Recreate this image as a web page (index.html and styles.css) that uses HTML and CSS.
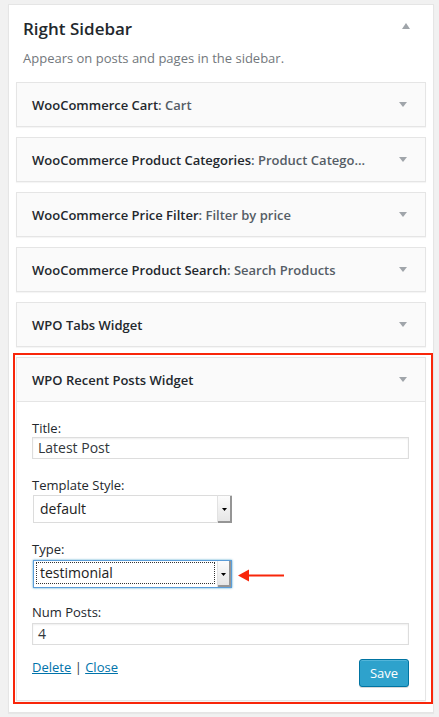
FILE: index.html
```html
<!DOCTYPE html>
<html lang="en">
<head>
<meta charset="utf-8">
<title>Right Sidebar</title>
<link rel="stylesheet" href="styles.css">
</head>
<body>
<div class="sidebar">
  <div class="sidebar-head">
    <div class="sidebar-text">
      <h2 class="sidebar-name">Right Sidebar</h2>
      <p class="sidebar-desc">Appears on posts and pages in the sidebar.</p>
    </div>
    <svg class="toggle-up" width="8" height="6" viewBox="0 0 8 6"><path d="M4 0L8 6H0z" fill="#a0a5aa"/></svg>
  </div>
  <div class="widgets">
    <div class="widget">
      <div class="widget-top">
        <h3 class="widget-title">WooCommerce Cart<span class="sub">: Cart</span></h3>
        <svg class="toggle-down" width="8" height="5" viewBox="0 0 8 5"><path d="M0 0H8L4 5z" fill="#a0a5aa"/></svg>
      </div>
    </div>
    <div class="widget">
      <div class="widget-top">
        <h3 class="widget-title">WooCommerce Product Categories<span class="sub">: Product Catego...</span></h3>
        <svg class="toggle-down" width="8" height="5" viewBox="0 0 8 5"><path d="M0 0H8L4 5z" fill="#a0a5aa"/></svg>
      </div>
    </div>
    <div class="widget">
      <div class="widget-top">
        <h3 class="widget-title">WooCommerce Price Filter<span class="sub">: Filter by price</span></h3>
        <svg class="toggle-down" width="8" height="5" viewBox="0 0 8 5"><path d="M0 0H8L4 5z" fill="#a0a5aa"/></svg>
      </div>
    </div>
    <div class="widget">
      <div class="widget-top">
        <h3 class="widget-title">WooCommerce Product Search<span class="sub">: Search Products</span></h3>
        <svg class="toggle-down" width="8" height="5" viewBox="0 0 8 5"><path d="M0 0H8L4 5z" fill="#a0a5aa"/></svg>
      </div>
    </div>
    <div class="widget">
      <div class="widget-top">
        <h3 class="widget-title">WPO Tabs Widget</h3>
        <svg class="toggle-down" width="8" height="5" viewBox="0 0 8 5"><path d="M0 0H8L4 5z" fill="#a0a5aa"/></svg>
      </div>
    </div>
    <div class="widget open">
      <div class="widget-top">
        <h3 class="widget-title">WPO Recent Posts Widget</h3>
        <svg class="toggle-down" width="8" height="5" viewBox="0 0 8 5"><path d="M0 0H8L4 5z" fill="#a0a5aa"/></svg>
      </div>
      <div class="widget-inside">
        <div class="field">
          <label class="field-label">Title:</label>
          <div class="text-input">Latest Post</div>
        </div>
        <div class="field">
          <label class="field-label">Template Style:</label>
          <div class="select-row row-template">
            <div class="select">
              <span class="select-value">default</span>
              <span class="select-btn"><svg width="5" height="3" viewBox="0 0 5 3"><path d="M0 0H5L2.5 3z" fill="#000"/></svg></span>
            </div>
          </div>
        </div>
        <div class="field field-type">
          <label class="field-label">Type:</label>
          <div class="select-row row-type">
            <div class="select focused">
              <span class="select-value">testimonial</span>
              <span class="select-btn"><svg width="5" height="3" viewBox="0 0 5 3"><path d="M0 0H5L2.5 3z" fill="#000"/></svg></span>
            </div>
            <svg class="pointer" width="47" height="13" viewBox="0 0 47 13"><path d="M0 6.5L11 0.5V12.5z" fill="#f8260a"/><rect x="10" y="5.5" width="36" height="2" fill="#f8260a"/></svg>
          </div>
        </div>
        <div class="field field-last">
          <label class="field-label">Num Posts:</label>
          <div class="text-input input-num">4</div>
        </div>
        <div class="actions">
          <div class="links"><a href="#">Delete</a> | <a href="#">Close</a></div>
          <button class="btn-save" type="button">Save</button>
        </div>
      </div>
      <div class="highlight"></div>
    </div>
  </div>
</div>
</body>
</html>
```

FILE: styles.css
```css
* { box-sizing: border-box; }
html, body { margin: 0; padding: 0; }
body {
  background: #f1f1f1;
  font-family: "Open Sans", "Liberation Sans", sans-serif;
  color: #23282d;
  font-size: 13px;
  line-height: 18px;
  width: 439px;
  height: 717px;
  overflow: hidden;
}
.sidebar {
  margin: 4px 0 0 8px;
  width: 426px;
  background: #fff;
  border: 1px solid #e5e5e5;
  box-shadow: 0 1px 1px rgba(0, 0, 0, .04);
  padding: 0 7px 11px;
}
.sidebar-head {
  display: flex;
  justify-content: space-between;
  align-items: flex-start;
  padding: 0 16px 0 7px;
}
.sidebar-name {
  margin: 12px 0 0;
  font-size: 17px;
  font-weight: 600;
  line-height: 23px;
  color: #23282d;
}
.sidebar-desc {
  margin: 9px 0 0;
  font-size: 13px;
  line-height: 18px;
  color: #72777c;
}
.toggle-up { display: block; margin-top: 18px; }
.widgets {
  display: flex;
  flex-direction: column;
  gap: 10px;
  margin-top: 15px;
}
.widget {
  position: relative;
  background: #fafafa;
  border: 1px solid #e5e5e5;
  box-shadow: 0 1px 1px rgba(0, 0, 0, .04);
}
.widget-top {
  display: flex;
  align-items: center;
  justify-content: space-between;
  height: 43px;
  padding: 0 18px 0 15px;
}
.widget-title {
  margin: 0;
  font-size: 13px;
  font-weight: 600;
  line-height: 18px;
  color: #23282d;
  white-space: nowrap;
}
.widget-title .sub { color: #555d66; }
.toggle-down { display: block; flex: none; }
.open .widget-top {
  height: 44px;
  border-bottom: 1px solid #e5e5e5;
}
.widget-inside {
  background: #fff;
  padding: 17px 16px 13px 15px;
}
.field { margin-bottom: 17px; }
.field-type { margin-bottom: 15px; }
.field-last { margin-bottom: 0; }
.field-label {
  display: block;
  font-size: 13px;
  line-height: 18px;
  color: #23282d;
}
.text-input {
  height: 22px;
  border: 1px solid #ddd;
  box-shadow: inset 0 1px 2px rgba(0, 0, 0, .07);
  padding: 0 5px;
  font-size: 14px;
  line-height: 20px;
  color: #32373c;
  background: #fff;
}
.input-num { margin-top: 2px; }
.select-row { display: flex; align-items: center; }
.row-template { margin-top: 1px; }
.row-type { margin-top: 2px; }
.select {
  display: flex;
  width: 199px;
  height: 28px;
  margin-left: 1px;
  border: 1px solid #dcdcdc;
  background: #fff;
}
.select-value {
  flex: 1;
  padding-left: 6px;
  font-size: 14px;
  line-height: 26px;
  color: #222;
}
.select-btn {
  flex: none;
  width: 15px;
  margin: -1px -1px -1px 0;
  padding-right: 2px;
  display: flex;
  align-items: center;
  justify-content: center;
  background: linear-gradient(#fcfcfc, #e4e4e4);
  border-left: 1px solid #e2e2e2;
  border-top: 1px solid #dcdcdc;
  box-shadow: inset -2px -2px 0 #959595;
}
.select-btn svg { display: block; }
.select.focused {
  border-color: #5b9dd9;
  box-shadow: 0 0 2px rgba(30, 140, 190, .8);
}
.select.focused .select-value {
  margin: 1px 2px 3px 2px;
  border: 1px dotted #333;
  padding-left: 3px;
  line-height: 20px;
}
.select.focused .select-btn {
  margin: 0;
  width: 14px;
  border-top: 0;
}
.pointer { display: block; margin: 2px 0 0 6px; }
.actions {
  display: flex;
  justify-content: space-between;
  align-items: flex-start;
  margin-top: 14px;
}
.links {
  margin-top: -1px;
  font-size: 13px;
  line-height: 18px;
  color: #32373c;
}
.links a { color: #0073aa; text-decoration: underline; }
.btn-save {
  width: 50px;
  height: 28px;
  margin: 0;
  padding: 0;
  background: #2ea2cc;
  border: 1px solid #0074a2;
  border-radius: 3px;
  color: #fff;
  font-family: "Open Sans", "Liberation Sans", sans-serif;
  font-size: 13px;
  line-height: 26px;
  text-align: center;
  box-shadow: inset 0 1px 0 rgba(120, 200, 230, .5), 0 1px 0 rgba(0, 0, 0, .15);
}
.highlight {
  position: absolute;
  top: -5px;
  left: -4px;
  right: -8px;
  bottom: -4px;
  border: 2px solid #f8260a;
  pointer-events: none;
}
```
